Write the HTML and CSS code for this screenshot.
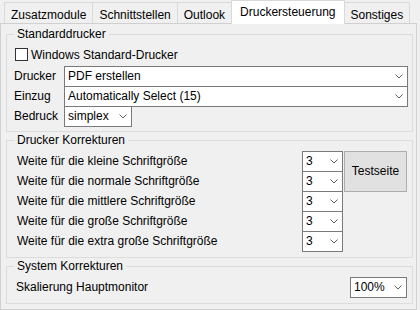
FILE: index.html
```html
<!DOCTYPE html>
<html lang="de">
<head>
    <meta charset="UTF-8">
    <title>Druckersteuerung</title>
    <link rel="stylesheet" href="styles.css">
</head>
<body>
    <div class="tabs">
        <div class="tab">Zusatzmodule</div>
        <div class="tab">Schnittstellen</div>
        <div class="tab">Outlook</div>
        <div class="tab active">Druckersteuerung</div>
        <div class="tab">Sonstiges</div>
    </div>

    <div class="page">
        <fieldset class="group printer">
            <legend>Standarddrucker</legend>
            <label class="check"><span class="box"></span>Windows Standard-Drucker</label>
            <div class="form">
                <span class="label">Drucker</span>
                <div class="combo">PDF erstellen <svg class="chev" viewBox="0 0 8 5" width="8" height="5"><path d="M0.5 0.5 4 4 7.5 0.5"/></svg></div>
                <span class="label">Einzug</span>
                <div class="combo">Automatically Select (15) <svg class="chev" viewBox="0 0 8 5" width="8" height="5"><path d="M0.5 0.5 4 4 7.5 0.5"/></svg></div>
                <span class="label">Bedruck</span>
                <div class="combo narrow">simplex <svg class="chev" viewBox="0 0 8 5" width="8" height="5"><path d="M0.5 0.5 4 4 7.5 0.5"/></svg></div>
            </div>
        </fieldset>

        <fieldset class="group corrections">
            <legend>Drucker Korrekturen</legend>
            <div class="korr">
                <span class="label">Weite für die kleine Schriftgröße</span>
                <div class="combo">3 <svg class="chev" viewBox="0 0 8 5" width="8" height="5"><path d="M0.5 0.5 4 4 7.5 0.5"/></svg></div>
                <button class="btn">Testseite</button>
                <span class="label">Weite für die normale Schriftgröße</span>
                <div class="combo">3 <svg class="chev" viewBox="0 0 8 5" width="8" height="5"><path d="M0.5 0.5 4 4 7.5 0.5"/></svg></div>
                <span class="label">Weite für die mittlere Schriftgröße</span>
                <div class="combo">3 <svg class="chev" viewBox="0 0 8 5" width="8" height="5"><path d="M0.5 0.5 4 4 7.5 0.5"/></svg></div>
                <span class="label">Weite für die große Schriftgröße</span>
                <div class="combo">3 <svg class="chev" viewBox="0 0 8 5" width="8" height="5"><path d="M0.5 0.5 4 4 7.5 0.5"/></svg></div>
                <span class="label">Weite für die extra große Schriftgröße</span>
                <div class="combo">3 <svg class="chev" viewBox="0 0 8 5" width="8" height="5"><path d="M0.5 0.5 4 4 7.5 0.5"/></svg></div>
            </div>
        </fieldset>

        <fieldset class="group system">
            <legend>System Korrekturen</legend>
            <div class="sysrow">
                <span class="label">Skalierung Hauptmonitor</span>
                <div class="combo">100% <svg class="chev" viewBox="0 0 8 5" width="8" height="5"><path d="M0.5 0.5 4 4 7.5 0.5"/></svg></div>
            </div>
        </fieldset>
    </div>
</body>
</html>
```

FILE: styles.css
```css
* {
    box-sizing: border-box;
}
html,
body {
    margin: 0;
    padding: 0;
    background: #f0f0f0;
    font-family: "Liberation Sans", Arial, sans-serif;
    font-size: 12px;
    color: #000;
    overflow: hidden;
}

/* tab strip */
.tabs {
    display: flex;
    align-items: flex-end;
    height: 23px;
    padding-left: 4px;
}
.tab {
    border: 1px solid #d9d9d9;
    border-bottom: 0;
    padding: 4px 6px 0;
    line-height: 16px;
    margin-right: -1px;
    background: #f0f0f0;
    white-space: nowrap;
}
.tab.active {
    background: #fff;
    padding: 3px 8px 4px;
    margin-bottom: -1px;
    position: relative;
    z-index: 1;
}

/* tab page */
.page {
    width: 417px;
    height: 287px;
    border: 1px solid #d0d0d0;
    padding: 3px 3px 0 5px;
}

.group {
    margin: 0;
    min-width: 0;
    border: 1px solid #dcdcdc;
    padding: 6px 4px 5px 7px;
}
.group legend {
    padding: 0 3px;
    line-height: 15px;
}
.group.corrections {
    margin-top: 1px;
    padding-top: 3px;
    padding-bottom: 6px;
}
.group.system {
    margin-top: 1px;
    padding-top: 3px;
    padding-bottom: 5px;
}

.check {
    display: flex;
    align-items: center;
    height: 13px;
    margin: 0 0 5px 1px;
}
.check .box {
    width: 13px;
    height: 13px;
    border: 1px solid #333;
    background: #fff;
    margin-right: 3px;
}

.label {
    line-height: 20px;
    white-space: nowrap;
}

.combo {
    height: 21px;
    margin-bottom: -1px;
    border: 1px solid #7a7a7a;
    background: #fff;
    display: flex;
    align-items: center;
    justify-content: space-between;
    padding: 0 4px 0 3px;
    line-height: 19px;
    white-space: nowrap;
}
.chev {
    flex: none;
    fill: none;
    stroke: #606060;
    stroke-width: 1;
}

.form {
    display: grid;
    grid-template-columns: 50px 1fr;
    align-items: start;
}
.combo.narrow {
    width: 68px;
}

.korr {
    display: grid;
    grid-template-columns: 1fr 41px 63px;
    column-gap: 1px;
    align-items: start;
    margin-right: 1px;
}
.korr .label {
    grid-column: 1;
    padding-left: 3px;
}
.korr .combo {
    grid-column: 2;
}
.btn {
    grid-column: 3;
    grid-row: 1 / span 2;
    height: 41px;
    margin: 0 0 -1px;
    padding: 0 0 1px;
    background: #e1e1e1;
    border: 1px solid #adadad;
    font: inherit;
    color: #000;
}

.sysrow {
    display: flex;
    justify-content: space-between;
    align-items: center;
    margin-right: 1px;
}
.sysrow .label {
    padding-left: 2px;
    line-height: 21px;
}
.sysrow .combo {
    width: 57px;
    margin-bottom: 0;
}
```
